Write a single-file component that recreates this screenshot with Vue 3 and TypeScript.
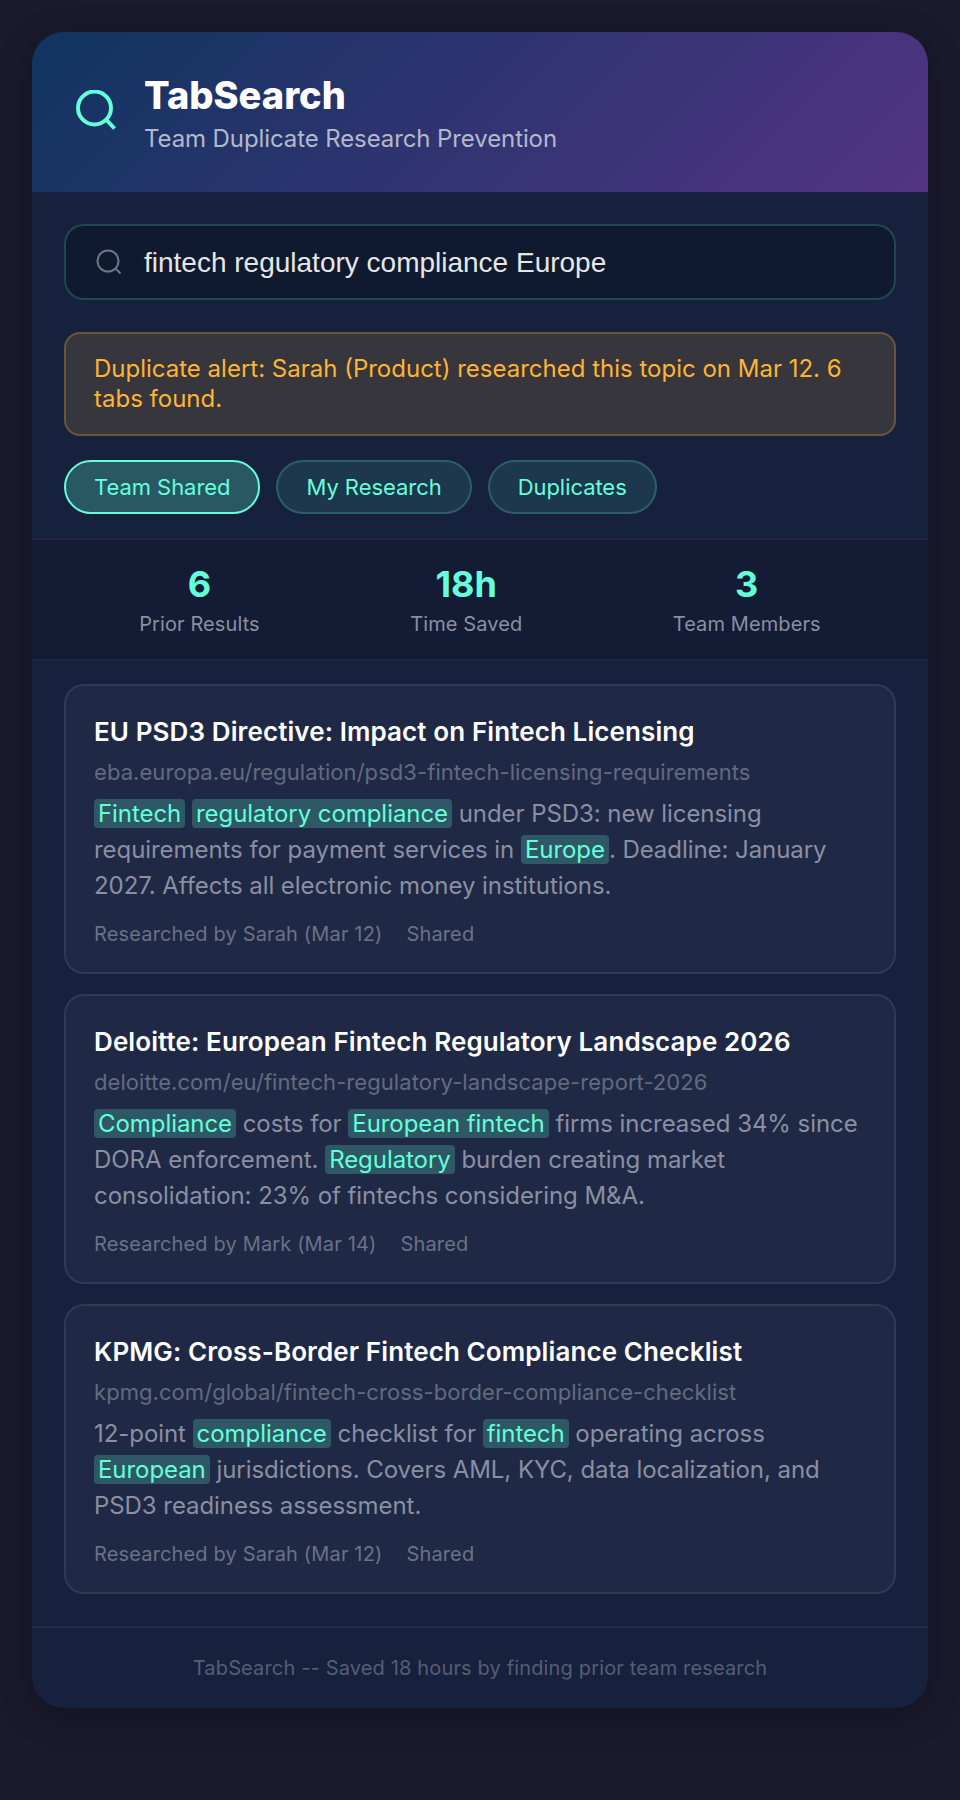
<template>
  <div class="page">
    <div class="app">
      <header class="header">
        <svg class="logo" width="40" height="40" viewBox="0 0 40 40" fill="none" stroke="#64ffda" stroke-width="4">
          <circle cx="18.5" cy="18" r="16.5" />
          <path d="M31 30.5l7.5 8" />
        </svg>
        <div class="brand">
          <h1 class="title">TabSearch</h1>
          <div class="subtitle">Team Duplicate Research Prevention</div>
        </div>
      </header>

      <section class="top">
        <div class="search">
          <svg class="search-icon" width="26" height="26" viewBox="0 0 26 26" fill="none" stroke="#6f7585" stroke-width="2">
            <circle cx="12" cy="12" r="10.5" />
            <path d="M19.5 19.5l5 5" />
          </svg>
          <span class="query">fintech regulatory compliance Europe</span>
        </div>
        <div class="alert">Duplicate alert: Sarah (Product) researched this topic on Mar 12. 6 tabs found.</div>
        <div class="tabs">
          <button v-for="(tab, i) in tabs" :key="tab" class="tab" :class="{ active: i === 0 }">{{ tab }}</button>
        </div>
      </section>

      <section class="stats">
        <div v-for="stat in stats" :key="stat.label" class="stat">
          <div class="stat-value">{{ stat.value }}</div>
          <div class="stat-label">{{ stat.label }}</div>
        </div>
      </section>

      <section class="results">
        <article v-for="result in results" :key="result.title" class="result">
          <h2 class="result-title">{{ result.title }}</h2>
          <div class="result-url">{{ result.url }}</div>
          <p class="result-text">
            <template v-for="(part, i) in result.text" :key="i">
              <mark v-if="i % 2" class="hl">{{ part }}</mark>
              <template v-else>{{ part }}</template>
            </template>
          </p>
          <div class="result-meta">
            <span>{{ result.by }}</span>
            <span>Shared</span>
          </div>
        </article>
      </section>

      <footer class="footer">TabSearch -- Saved 18 hours by finding prior team research</footer>
    </div>
  </div>
</template>

<script setup lang="ts">
const tabs = ['Team Shared', 'My Research', 'Duplicates']

const stats = [
  { value: '6', label: 'Prior Results' },
  { value: '18h', label: 'Time Saved' },
  { value: '3', label: 'Team Members' },
]

// odd entries of text are the highlighted words
const results = [
  {
    title: 'EU PSD3 Directive: Impact on Fintech Licensing',
    url: 'eba.europa.eu/regulation/psd3-fintech-licensing-requirements',
    text: ['', 'Fintech', ' ', 'regulatory compliance', ' under PSD3: new licensing requirements for payment services in ', 'Europe', '. Deadline: January 2027. Affects all electronic money institutions.'],
    by: 'Researched by Sarah (Mar 12)',
  },
  {
    title: 'Deloitte: European Fintech Regulatory Landscape 2026',
    url: 'deloitte.com/eu/fintech-regulatory-landscape-report-2026',
    text: ['', 'Compliance', ' costs for ', 'European fintech', ' firms increased 34% since DORA enforcement. ', 'Regulatory', ' burden creating market consolidation: 23% of fintechs considering M&A.'],
    by: 'Researched by Mark (Mar 14)',
  },
  {
    title: 'KPMG: Cross-Border Fintech Compliance Checklist',
    url: 'kpmg.com/global/fintech-cross-border-compliance-checklist',
    text: ['12-point ', 'compliance', ' checklist for ', 'fintech', ' operating across ', 'European', ' jurisdictions. Covers AML, KYC, data localization, and PSD3 readiness assessment.'],
    by: 'Researched by Sarah (Mar 12)',
  },
]
</script>

<style>
html,
body {
  background: #1a1a2e;
}
</style>

<style scoped>
.page {
  padding: 32px;
  min-height: 1800px;
  box-sizing: border-box;
  font-family: Inter, "Liberation Sans", sans-serif;
}

.app {
  background: #16213e;
  border-radius: 32px;
  overflow: hidden;
  box-shadow: 0 8px 32px rgba(0, 0, 0, 0.3);
}

.header {
  display: flex;
  align-items: center;
  gap: 28px;
  height: 160px;
  box-sizing: border-box;
  padding: 0 32px 0 44px;
  background: linear-gradient(135deg, #0f3460, #533483);
}

.logo {
  flex: none;
  margin-top: -4px;
}

.brand {
  padding-top: 2px;
}

.title {
  margin: 0;
  font-size: 38px;
  line-height: 46px;
  font-weight: 800;
  color: #fff;
}

.subtitle {
  margin-top: 6px;
  font-size: 24px;
  line-height: 30px;
  letter-spacing: -0.1px;
  color: #b4b8cc;
}

.top {
  padding: 32px 32px 24px;
}

.search {
  display: flex;
  align-items: center;
  gap: 22px;
  height: 76px;
  box-sizing: border-box;
  padding: 0 30px;
  background: #0f1a30;
  border: 2px solid rgba(100, 255, 218, 0.2);
  border-radius: 20px;
  font-family: "Liberation Sans", Arial, sans-serif;
  font-size: 28px;
  color: #e6e6e6;
}

.query {
  padding-top: 2px;
}

.alert {
  margin-top: 32px;
  padding: 20px 28px;
  background: rgba(255, 184, 48, 0.14);
  border: 2px solid rgba(255, 184, 48, 0.25);
  border-radius: 16px;
  font-size: 24px;
  line-height: 30px;
  color: #ffb432;
}

.tabs {
  display: flex;
  gap: 16px;
  margin-top: 24px;
}

.tab {
  height: 54px;
  padding: 0 28px;
  background: rgba(100, 255, 218, 0.1);
  border: 2px solid rgba(100, 255, 218, 0.2);
  border-radius: 27px;
  font: inherit;
  font-size: 22px;
  letter-spacing: -0.05px;
  color: #64ffda;
}

.tab.active {
  background: rgba(100, 255, 218, 0.25);
  border-color: #64ffda;
}

.stats {
  display: flex;
  justify-content: space-around;
  padding: 22px 32px 23px;
  background: rgba(15, 23, 42, 0.5);
  border-top: 2px solid rgba(255, 255, 255, 0.05);
  border-bottom: 2px solid rgba(255, 255, 255, 0.05);
}

.stat {
  text-align: center;
}

.stat-value {
  font-size: 36px;
  line-height: 44px;
  font-weight: 700;
  color: #64ffda;
}

.stat-label {
  margin-top: 6px;
  font-size: 20px;
  line-height: 24px;
  letter-spacing: 0.1px;
  color: #8a8fa3;
}

.results {
  display: flex;
  flex-direction: column;
  gap: 20px;
  padding: 23px 32px 32px;
}

.result {
  padding: 29px 28px 26px;
  background: rgba(255, 255, 255, 0.04);
  border: 2px solid rgba(255, 255, 255, 0.08);
  border-radius: 20px;
}

.result-title {
  margin: 0;
  font-size: 26px;
  line-height: 34px;
  font-weight: 600;
  letter-spacing: 0.1px;
  color: #fff;
}

.result-url {
  margin-top: 8px;
  font-size: 22px;
  line-height: 30px;
  letter-spacing: 0.06px;
  color: #636a80;
}

.result-text {
  margin: 9px 0 0;
  font-size: 24px;
  line-height: 36px;
  letter-spacing: -0.06px;
  color: #8a8fa3;
}

.hl {
  padding: 0 4px;
  background: rgba(100, 255, 218, 0.22);
  border-radius: 4px;
  color: #64ffda;
}

.result-meta {
  display: flex;
  gap: 24px;
  margin-top: 18px;
  font-size: 20px;
  line-height: 24px;
  letter-spacing: 0.15px;
  color: #6b7186;
}

.footer {
  padding: 28px 32px;
  border-top: 2px solid rgba(255, 255, 255, 0.05);
  text-align: center;
  font-size: 20px;
  line-height: 24px;
  letter-spacing: 0.15px;
  color: #575d73;
}
</style>
